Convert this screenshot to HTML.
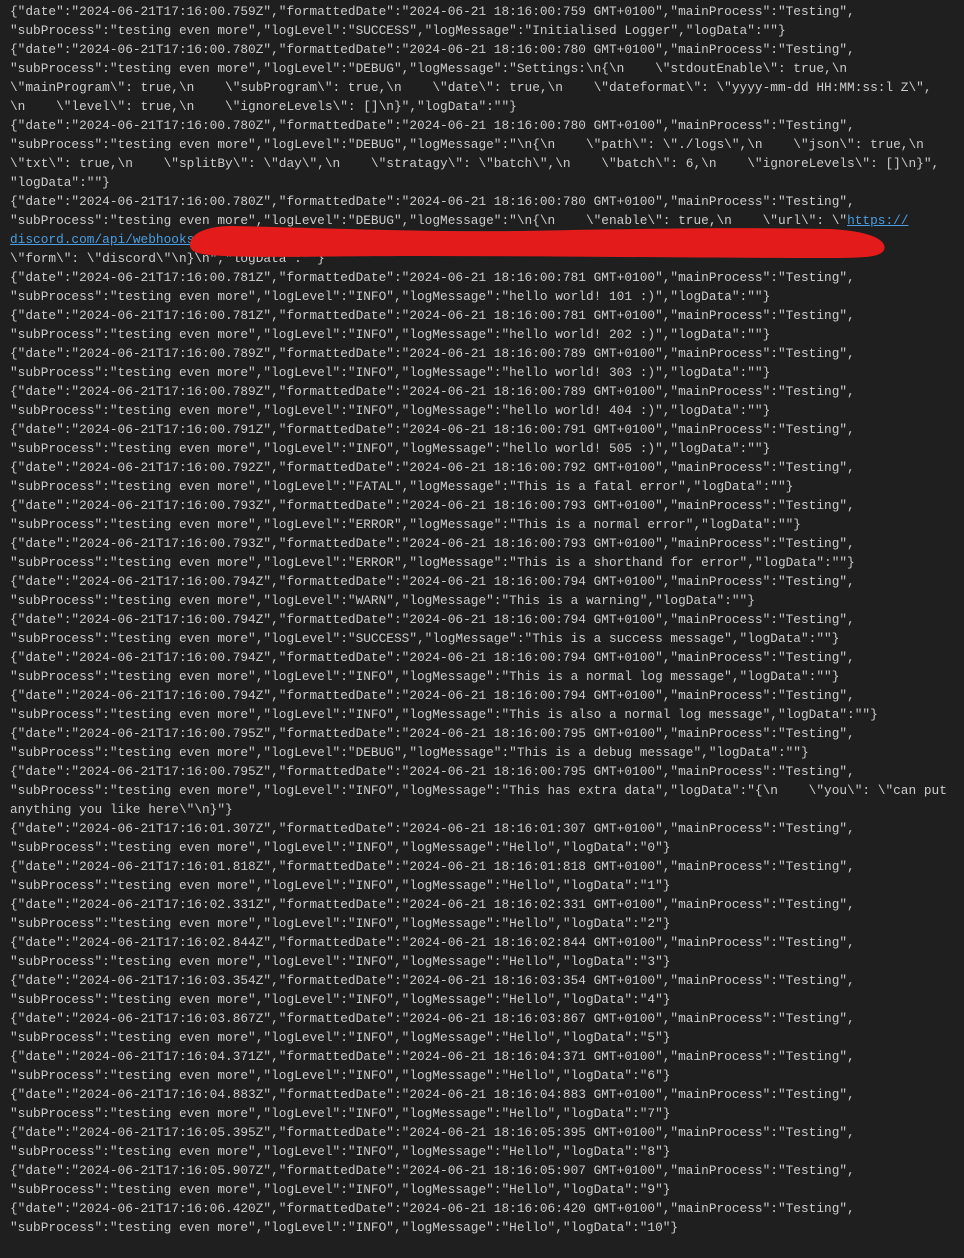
<!DOCTYPE html>
<html><head><meta charset="utf-8">
<style>
html,body{margin:0;padding:0;background:#1f1f1f;width:964px;height:1258px;overflow:hidden;}
pre{margin:0;padding:2px 0 0 10px;font-family:"Liberation Mono",monospace;font-size:12.8px;line-height:19px;color:#cccccc;white-space:pre;}
.l{color:#4a9de0;text-decoration:underline;}
svg{position:absolute;left:0;top:0;}
</style></head><body>
<pre>{"date":"2024-06-21T17:16:00.759Z","formattedDate":"2024-06-21 18:16:00:759 GMT+0100","mainProcess":"Testing",
"subProcess":"testing even more","logLevel":"SUCCESS","logMessage":"Initialised Logger","logData":""}
{"date":"2024-06-21T17:16:00.780Z","formattedDate":"2024-06-21 18:16:00:780 GMT+0100","mainProcess":"Testing",
"subProcess":"testing even more","logLevel":"DEBUG","logMessage":"Settings:\n{\n    \"stdoutEnable\": true,\n
\"mainProgram\": true,\n    \"subProgram\": true,\n    \"date\": true,\n    \"dateformat\": \"yyyy-mm-dd HH:MM:ss:l Z\",
\n    \"level\": true,\n    \"ignoreLevels\": []\n}","logData":""}
{"date":"2024-06-21T17:16:00.780Z","formattedDate":"2024-06-21 18:16:00:780 GMT+0100","mainProcess":"Testing",
"subProcess":"testing even more","logLevel":"DEBUG","logMessage":"\n{\n    \"path\": \"./logs\",\n    \"json\": true,\n
\"txt\": true,\n    \"splitBy\": \"day\",\n    \"stratagy\": \"batch\",\n    \"batch\": 6,\n    \"ignoreLevels\": []\n}",
"logData":""}
{"date":"2024-06-21T17:16:00.780Z","formattedDate":"2024-06-21 18:16:00:780 GMT+0100","mainProcess":"Testing",
"subProcess":"testing even more","logLevel":"DEBUG","logMessage":"\n{\n    \"enable\": true,\n    \"url\": \"<span class="l">https://</span>
<span class="l">discord.com/api/webhooks                                                                                </span>",\n
\"form\": \"discord\"\n}\n","logData":""}
{"date":"2024-06-21T17:16:00.781Z","formattedDate":"2024-06-21 18:16:00:781 GMT+0100","mainProcess":"Testing",
"subProcess":"testing even more","logLevel":"INFO","logMessage":"hello world! 101 :)","logData":""}
{"date":"2024-06-21T17:16:00.781Z","formattedDate":"2024-06-21 18:16:00:781 GMT+0100","mainProcess":"Testing",
"subProcess":"testing even more","logLevel":"INFO","logMessage":"hello world! 202 :)","logData":""}
{"date":"2024-06-21T17:16:00.789Z","formattedDate":"2024-06-21 18:16:00:789 GMT+0100","mainProcess":"Testing",
"subProcess":"testing even more","logLevel":"INFO","logMessage":"hello world! 303 :)","logData":""}
{"date":"2024-06-21T17:16:00.789Z","formattedDate":"2024-06-21 18:16:00:789 GMT+0100","mainProcess":"Testing",
"subProcess":"testing even more","logLevel":"INFO","logMessage":"hello world! 404 :)","logData":""}
{"date":"2024-06-21T17:16:00.791Z","formattedDate":"2024-06-21 18:16:00:791 GMT+0100","mainProcess":"Testing",
"subProcess":"testing even more","logLevel":"INFO","logMessage":"hello world! 505 :)","logData":""}
{"date":"2024-06-21T17:16:00.792Z","formattedDate":"2024-06-21 18:16:00:792 GMT+0100","mainProcess":"Testing",
"subProcess":"testing even more","logLevel":"FATAL","logMessage":"This is a fatal error","logData":""}
{"date":"2024-06-21T17:16:00.793Z","formattedDate":"2024-06-21 18:16:00:793 GMT+0100","mainProcess":"Testing",
"subProcess":"testing even more","logLevel":"ERROR","logMessage":"This is a normal error","logData":""}
{"date":"2024-06-21T17:16:00.793Z","formattedDate":"2024-06-21 18:16:00:793 GMT+0100","mainProcess":"Testing",
"subProcess":"testing even more","logLevel":"ERROR","logMessage":"This is a shorthand for error","logData":""}
{"date":"2024-06-21T17:16:00.794Z","formattedDate":"2024-06-21 18:16:00:794 GMT+0100","mainProcess":"Testing",
"subProcess":"testing even more","logLevel":"WARN","logMessage":"This is a warning","logData":""}
{"date":"2024-06-21T17:16:00.794Z","formattedDate":"2024-06-21 18:16:00:794 GMT+0100","mainProcess":"Testing",
"subProcess":"testing even more","logLevel":"SUCCESS","logMessage":"This is a success message","logData":""}
{"date":"2024-06-21T17:16:00.794Z","formattedDate":"2024-06-21 18:16:00:794 GMT+0100","mainProcess":"Testing",
"subProcess":"testing even more","logLevel":"INFO","logMessage":"This is a normal log message","logData":""}
{"date":"2024-06-21T17:16:00.794Z","formattedDate":"2024-06-21 18:16:00:794 GMT+0100","mainProcess":"Testing",
"subProcess":"testing even more","logLevel":"INFO","logMessage":"This is also a normal log message","logData":""}
{"date":"2024-06-21T17:16:00.795Z","formattedDate":"2024-06-21 18:16:00:795 GMT+0100","mainProcess":"Testing",
"subProcess":"testing even more","logLevel":"DEBUG","logMessage":"This is a debug message","logData":""}
{"date":"2024-06-21T17:16:00.795Z","formattedDate":"2024-06-21 18:16:00:795 GMT+0100","mainProcess":"Testing",
"subProcess":"testing even more","logLevel":"INFO","logMessage":"This has extra data","logData":"{\n    \"you\": \"can put
anything you like here\"\n}"}
{"date":"2024-06-21T17:16:01.307Z","formattedDate":"2024-06-21 18:16:01:307 GMT+0100","mainProcess":"Testing",
"subProcess":"testing even more","logLevel":"INFO","logMessage":"Hello","logData":"0"}
{"date":"2024-06-21T17:16:01.818Z","formattedDate":"2024-06-21 18:16:01:818 GMT+0100","mainProcess":"Testing",
"subProcess":"testing even more","logLevel":"INFO","logMessage":"Hello","logData":"1"}
{"date":"2024-06-21T17:16:02.331Z","formattedDate":"2024-06-21 18:16:02:331 GMT+0100","mainProcess":"Testing",
"subProcess":"testing even more","logLevel":"INFO","logMessage":"Hello","logData":"2"}
{"date":"2024-06-21T17:16:02.844Z","formattedDate":"2024-06-21 18:16:02:844 GMT+0100","mainProcess":"Testing",
"subProcess":"testing even more","logLevel":"INFO","logMessage":"Hello","logData":"3"}
{"date":"2024-06-21T17:16:03.354Z","formattedDate":"2024-06-21 18:16:03:354 GMT+0100","mainProcess":"Testing",
"subProcess":"testing even more","logLevel":"INFO","logMessage":"Hello","logData":"4"}
{"date":"2024-06-21T17:16:03.867Z","formattedDate":"2024-06-21 18:16:03:867 GMT+0100","mainProcess":"Testing",
"subProcess":"testing even more","logLevel":"INFO","logMessage":"Hello","logData":"5"}
{"date":"2024-06-21T17:16:04.371Z","formattedDate":"2024-06-21 18:16:04:371 GMT+0100","mainProcess":"Testing",
"subProcess":"testing even more","logLevel":"INFO","logMessage":"Hello","logData":"6"}
{"date":"2024-06-21T17:16:04.883Z","formattedDate":"2024-06-21 18:16:04:883 GMT+0100","mainProcess":"Testing",
"subProcess":"testing even more","logLevel":"INFO","logMessage":"Hello","logData":"7"}
{"date":"2024-06-21T17:16:05.395Z","formattedDate":"2024-06-21 18:16:05:395 GMT+0100","mainProcess":"Testing",
"subProcess":"testing even more","logLevel":"INFO","logMessage":"Hello","logData":"8"}
{"date":"2024-06-21T17:16:05.907Z","formattedDate":"2024-06-21 18:16:05:907 GMT+0100","mainProcess":"Testing",
"subProcess":"testing even more","logLevel":"INFO","logMessage":"Hello","logData":"9"}
{"date":"2024-06-21T17:16:06.420Z","formattedDate":"2024-06-21 18:16:06:420 GMT+0100","mainProcess":"Testing",
"subProcess":"testing even more","logLevel":"INFO","logMessage":"Hello","logData":"10"}</pre>
<svg width="964" height="1258" viewBox="0 0 964 1258">
<path d="M190 245 C190 232 210 226 232 226 C320 228 420 232 520 231 C620 229 740 227 830 229 C870 231 888 240 884 250 C880 258 860 258 820 258 C700 258 560 256 420 256 C330 256 260 258 225 256 C198 255 190 252 190 245 Z" fill="#e31b1b"/>
</svg>
</body></html>
